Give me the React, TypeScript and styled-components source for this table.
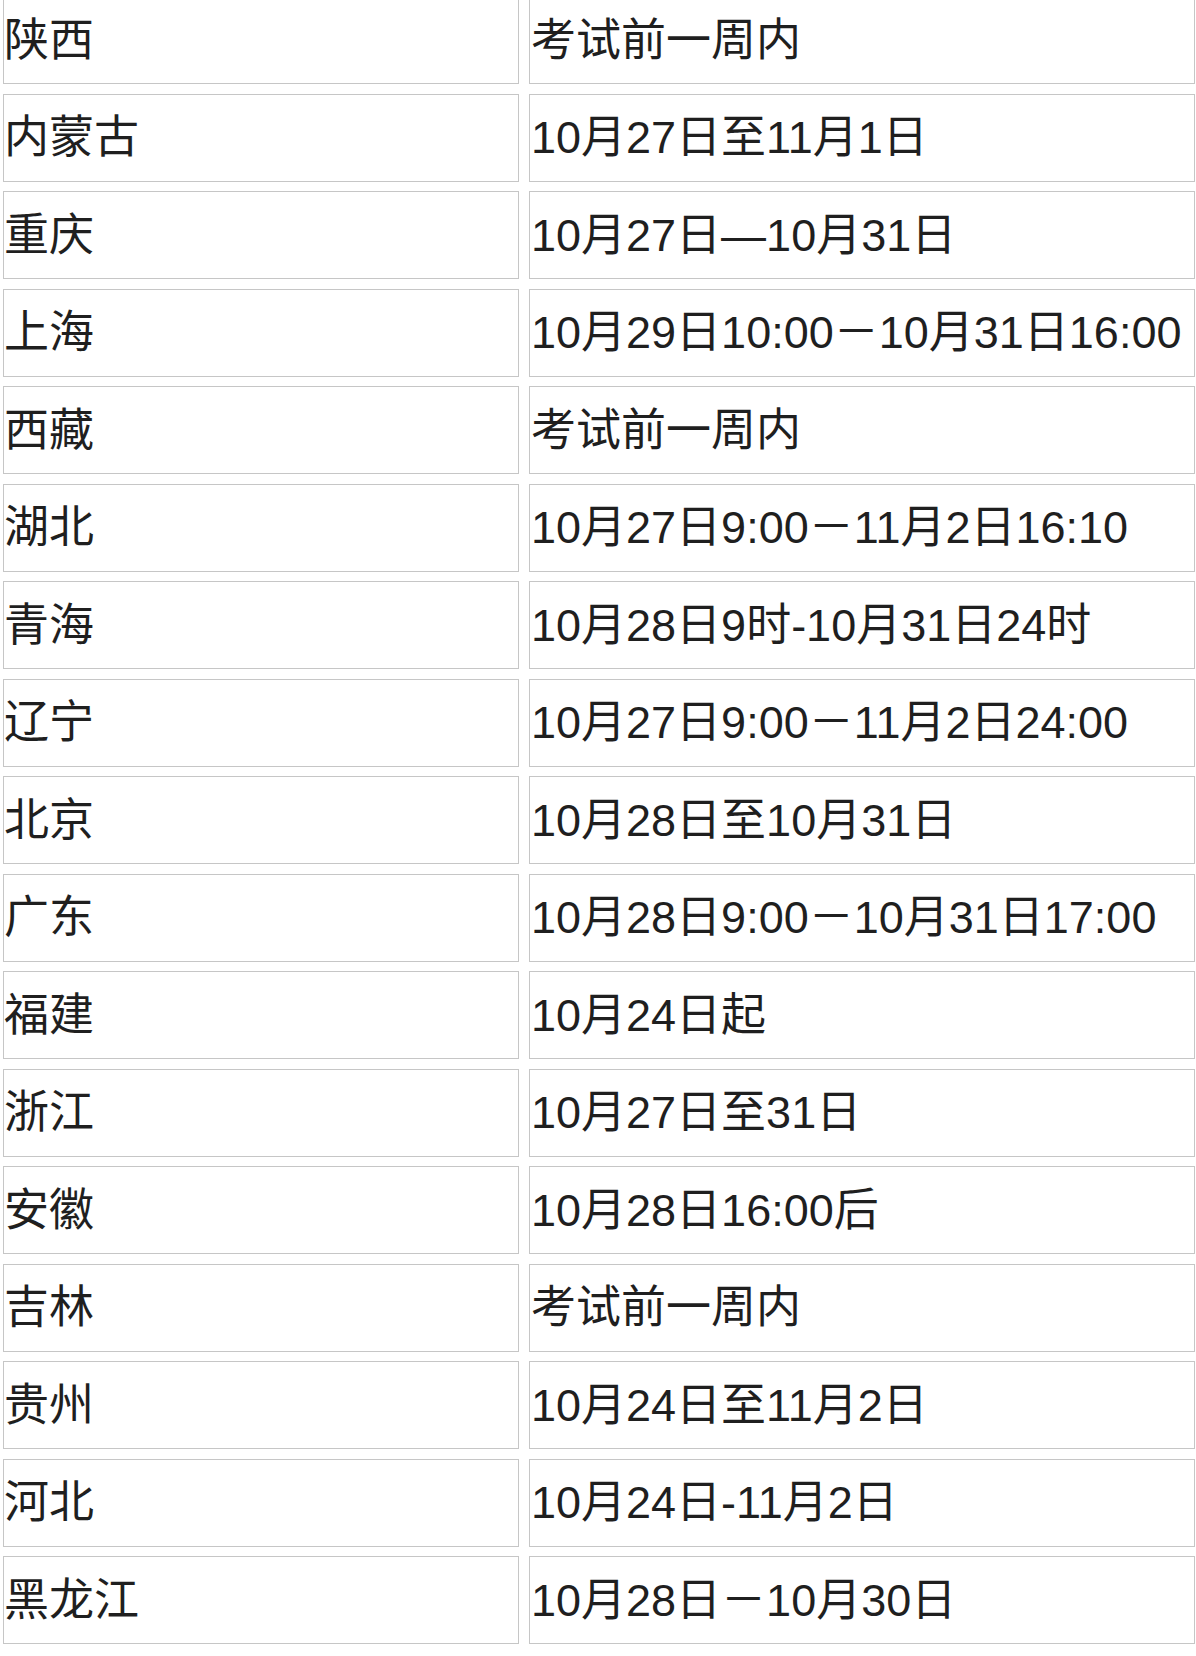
import React from "react";
import styled, { createGlobalStyle } from "styled-components";

const GlobalStyle = createGlobalStyle`
  html, body {
    margin: 0;
    padding: 0;
    background: #ffffff;
  }
  body {
    font-family: "Liberation Sans", "Noto Sans CJK SC", sans-serif;
    color: #1f1f1f;
  }
`;

const Sheet = styled.div`
  display: flex;
  flex-direction: column;
  gap: 9.5px;
  margin-top: -4px;
  padding-left: 3px;
  width: 1193px;
  height: 1656px;
  overflow: hidden;
`;

const Row = styled.div`
  display: grid;
  grid-template-columns: 516px 666px;
  column-gap: 10px;
  height: 88px;
  flex-shrink: 0;
`;

const Cell = styled.div<{ $inset: number }>`
  box-sizing: border-box;
  display: flex;
  align-items: center;
  padding-left: ${(p) => p.$inset}px;
  border: 1px solid #c6c6c6;
  font-size: 45px;
  line-height: 1;
  white-space: nowrap;
  overflow: hidden;
`;

interface Entry {
  region: string;
  period: string;
}

const entries: Entry[] = [
  { region: "陕西", period: "考试前一周内" },
  { region: "内蒙古", period: "10月27日至11月1日" },
  { region: "重庆", period: "10月27日—10月31日" },
  { region: "上海", period: "10月29日10:00－10月31日16:00" },
  { region: "西藏", period: "考试前一周内" },
  { region: "湖北", period: "10月27日9:00－11月2日16:10" },
  { region: "青海", period: "10月28日9时-10月31日24时" },
  { region: "辽宁", period: "10月27日9:00－11月2日24:00" },
  { region: "北京", period: "10月28日至10月31日" },
  { region: "广东", period: "10月28日9:00－10月31日17:00" },
  { region: "福建", period: "10月24日起" },
  { region: "浙江", period: "10月27日至31日" },
  { region: "安徽", period: "10月28日16:00后" },
  { region: "吉林", period: "考试前一周内" },
  { region: "贵州", period: "10月24日至11月2日" },
  { region: "河北", period: "10月24日-11月2日" },
  { region: "黑龙江", period: "10月28日－10月30日" },
];

const App: React.FC = () => {
  return (
    <>
      <GlobalStyle />
      <Sheet>
        {entries.map((item) => (
          <Row key={item.region}>
            <Cell $inset={0}>{item.region}</Cell>
            <Cell $inset={1}>{item.period}</Cell>
          </Row>
        ))}
      </Sheet>
    </>
  );
};

export default App;
